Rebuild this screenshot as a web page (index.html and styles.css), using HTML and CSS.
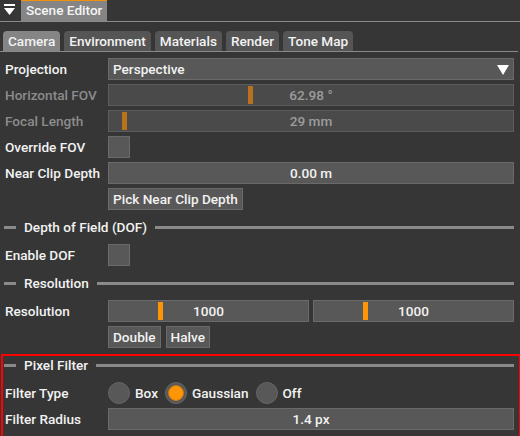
FILE: index.html
```html
<!DOCTYPE html>
<html>
<head>
<meta charset="utf-8">
<link rel="stylesheet" href="styles.css">
</head>
<body>
<div class="panel">
  <div class="header">
    <svg class="collapse" width="12" height="12" viewBox="0 0 12 12"><rect x="0" y="0" width="11" height="2" fill="#fff"/><path d="M0 4 H11 L5.5 11 Z" fill="#fff"/></svg>
    <div class="title-tab">Scene Editor</div>
  </div>
  <div class="tabs">
    <div class="tab active">Camera</div>
    <div class="tab">Environment</div>
    <div class="tab">Materials</div>
    <div class="tab">Render</div>
    <div class="tab">Tone Map</div>
  </div>
  <div class="form">
    <div class="row">
      <div class="label">Projection</div>
      <div class="combo"><span>Perspective</span><svg width="12" height="10" viewBox="0 0 12 10"><path d="M0 0 H12 L6 10 Z" fill="#fff"/></svg></div>
    </div>
    <div class="row">
      <div class="label disabled">Horizontal FOV</div>
      <div class="slider off"><div class="handle" style="left:139px"></div><span>62.98 °</span></div>
    </div>
    <div class="row">
      <div class="label disabled">Focal Length</div>
      <div class="slider off"><div class="handle" style="left:13px"></div><span>29 mm</span></div>
    </div>
    <div class="row">
      <div class="label">Override FOV</div>
      <div class="check"></div>
    </div>
    <div class="row">
      <div class="label">Near Clip Depth</div>
      <div class="slider"><span>0.00 m</span></div>
    </div>
    <div class="row">
      <div class="label"></div>
      <div class="btns"><div class="btn">Pick Near Clip Depth</div></div>
    </div>
    <div class="sep"><div class="dash"></div><span>Depth of Field (DOF)</span><div class="line"></div></div>
    <div class="row">
      <div class="label">Enable DOF</div>
      <div class="check"></div>
    </div>
    <div class="sep"><div class="dash"></div><span>Resolution</span><div class="line"></div></div>
    <div class="row">
      <div class="label">Resolution</div>
      <div class="pair">
        <div class="slider"><div class="handle" style="left:49px"></div><span>1000</span></div>
        <div class="slider"><div class="handle" style="left:49px"></div><span>1000</span></div>
      </div>
    </div>
    <div class="row">
      <div class="label"></div>
      <div class="btns"><div class="btn">Double</div><div class="btn">Halve</div></div>
    </div>
    <div class="section">
      <div class="sep"><div class="dash"></div><span>Pixel Filter</span><div class="line"></div></div>
      <div class="row">
        <div class="label">Filter Type</div>
        <div class="radios">
          <div class="radio"><div class="dot"></div><span>Box</span></div>
          <div class="radio on"><div class="dot"></div><span>Gaussian</span></div>
          <div class="radio"><div class="dot"></div><span>Off</span></div>
        </div>
      </div>
      <div class="row">
        <div class="label">Filter Radius</div>
        <div class="slider"><span>1.4 px</span></div>
      </div>
    </div>
  </div>
</div>
</body>
</html>
```
FILE: styles.css
```css
* { box-sizing: border-box; }
html, body { margin: 0; padding: 0; }
body {
  width: 520px;
  height: 436px;
  background: #363636;
  font-family: Roboto, "Liberation Sans", sans-serif;
  font-weight: 500;
  font-size: 13.6px;
  color: #f2f2f2;
  overflow: hidden;
}
.panel { display: flex; flex-direction: column; }
.header {
  height: 22px;
  display: flex;
  align-items: flex-start;
  border-bottom: 1px solid #8a8a8a;
}
.collapse { margin: 4px 0 0 4px; }
.title-tab {
  margin-left: 5px;
  height: 21px;
  padding: 0 5px;
  background: #858585;
  border-top: 1px solid #f0900c;
  line-height: 19px;
  color: #f4f4f4;
}
.tabs {
  margin-top: 9px;
  padding-left: 3px;
  display: flex;
  gap: 4px;
  height: 21px;
  border-bottom: 1px solid #8a8a8a;
  margin-right: 2px;
}
.tab {
  height: 20px;
  padding: 0 5px;
  background: #555555;
  border-radius: 4px 4px 0 0;
  line-height: 21px;
}
.tab.active { background: #858585; }
.form {
  margin-top: 6px;
  display: flex;
  flex-direction: column;
  gap: 4px;
}
.row {
  display: flex;
  height: 22px;
  align-items: center;
}
.label {
  width: 108px;
  padding-left: 5px;
  flex: none;
}
.label.disabled { color: #8c8c8c; }
.combo, .slider {
  position: relative;
  width: 406px;
  height: 22px;
  background: #585858;
  border: 1px solid #6a6a6a;
  display: flex;
  align-items: center;
}
.combo { justify-content: space-between; padding: 0 4px 0 4px; }
.combo svg { margin-top: 1px; }
.slider { justify-content: center; }
.slider.off { background: #4a4a4a; border-color: #5c5c5c; color: #9c9c9c; }
.slider span { position: relative; }
.handle {
  position: absolute;
  top: 1px;
  width: 5px;
  height: 18px;
  background: #ff9506;
}
.slider.off .handle { background: #b8721e; }
.pair { display: flex; gap: 4px; width: 406px; }
.pair .slider { width: 201px; }
.check {
  width: 22px;
  height: 22px;
  background: #585858;
  border: 1px solid #6a6a6a;
}
.btns { display: flex; gap: 5px; }
.btn {
  height: 22px;
  padding: 0 4px;
  background: #585858;
  border: 1px solid #6a6a6a;
  line-height: 20px;
}
.sep {
  height: 26px;
  display: flex;
  align-items: center;
  padding: 0 6px 0 4px;
}
.sep .dash { width: 12px; height: 3px; background: #8a8a8a; }
.sep span { margin: 0 8px; }
.sep .line { flex: 1; height: 3px; background: #8a8a8a; }
.section {
  position: relative;
  display: flex;
  flex-direction: column;
  gap: 4px;
}
.section::after {
  content: "";
  position: absolute;
  left: 1px;
  top: 2px;
  width: 516px;
  height: 81px;
  border: 2px solid #ff0000;
}
.radios { display: flex; gap: 7px; }
.radio { display: flex; align-items: center; gap: 5px; }
.dot {
  width: 22px;
  height: 22px;
  border-radius: 50%;
  background: #585858;
  border: 1px solid #666;
  display: flex;
  align-items: center;
  justify-content: center;
}
.radio.on .dot::after {
  content: "";
  width: 14px;
  height: 14px;
  border-radius: 50%;
  background: #ff9506;
  border: 1px solid #c9780e;
}
```
